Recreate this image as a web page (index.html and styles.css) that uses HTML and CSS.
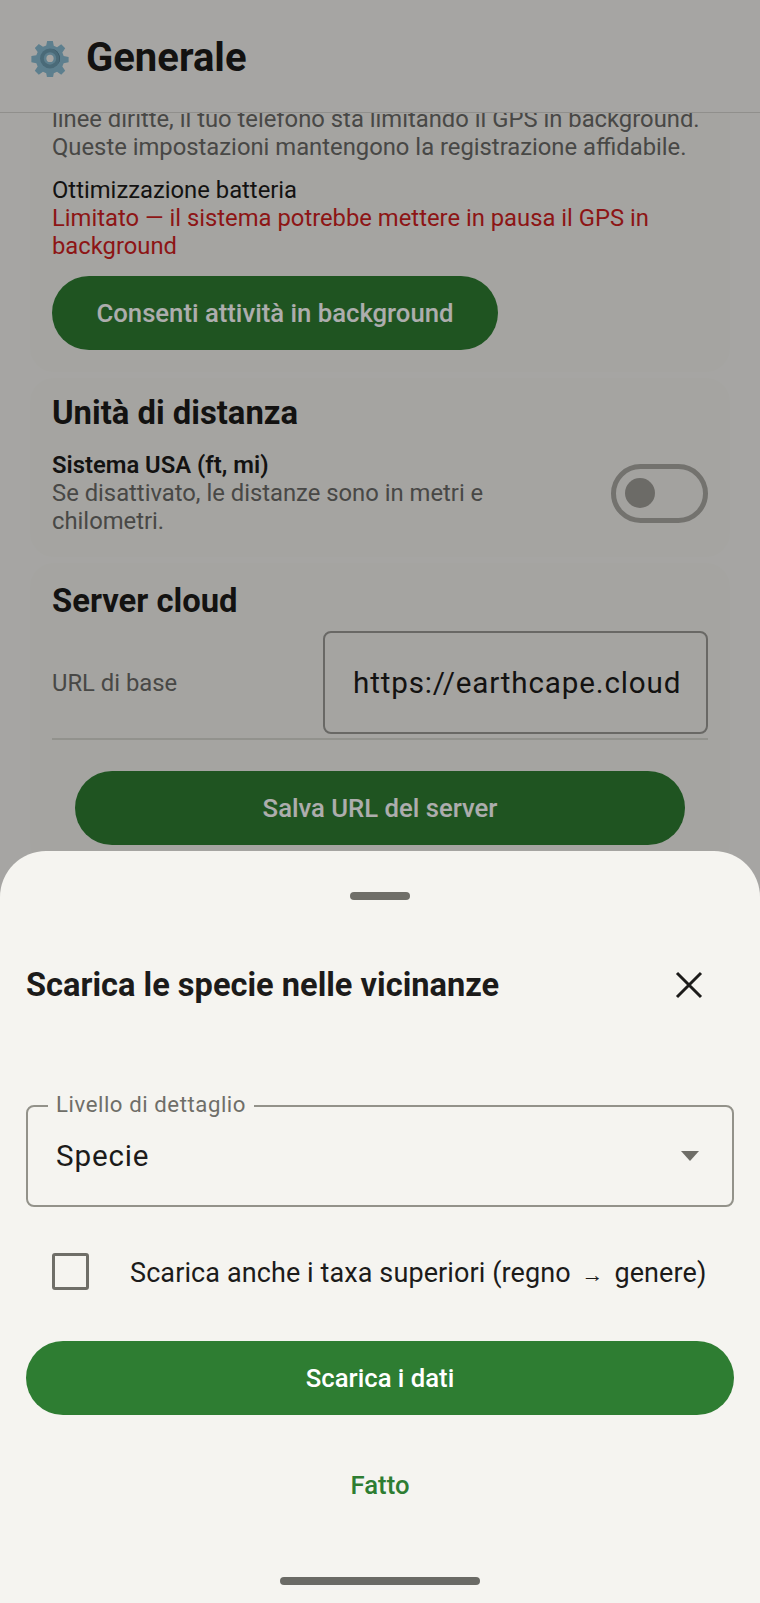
FILE: index.html
```html
<!DOCTYPE html>
<html lang="it">
<head>
<meta charset="utf-8">
<title>Generale</title>
<link rel="stylesheet" href="styles.css">
</head>
<body>
<div class="screen">
  <header class="topbar">
    <svg class="gear" viewBox="0 0 40 40" width="38" height="38" aria-hidden="true">
      <path fill="#8abcd2" d="M17 2h6l1 5.200 3.400 1.400 4.400-3 4.200 4.200-3 4.400 1.400 3.800 5.200 1v5.600l-5.200 1-1.400 3.400 3 4.400-4.200 4.200-4.400-3-3.400 1.400-1 5.200h-6l-1-5.200-3.400-1.400-4.400 3-4.200-4.200 3-4.400-1.400-3.400-5.200-1V18l5.200-1L7 13.800l-3-4.400L8.200 5.200l4.400 3L16 6.800z"/>
      <circle cx="20" cy="20.500" r="10.500" fill="#6d9cb2"/>
      <path fill="#4f7688" d="M20 10a10.500 10.500 0 0 1 8 17.200 11 11 0 0 0-8-17.200z"/>
      <circle cx="20" cy="20.500" r="6.500" fill="#8abcd2"/>
      <circle cx="20" cy="20.500" r="3.800" fill="#f5f4f0"/>
    </svg>
    <h1 class="page-title">Generale</h1>
  </header>
  <main class="scroll">
    <section class="card card-first">
      <p class="body muted">linee diritte, il tuo telefono sta limitando il GPS in background. Queste impostazioni mantengono la registrazione affidabile.</p>
      <p class="body status-label">Ottimizzazione batteria</p>
      <p class="body danger">Limitato — il sistema potrebbe mettere in pausa il GPS in background</p>
      <button class="btn btn-inline" type="button">Consenti attività in background</button>
    </section>
    <section class="card card-units">
      <h2 class="card-title">Unità di distanza</h2>
      <div class="setting-row">
        <div class="setting-text">
          <p class="body strong">Sistema USA (ft, mi)</p>
          <p class="body muted">Se disattivato, le distanze sono in metri e chilometri.</p>
        </div>
        <span class="switch"><span class="thumb"></span></span>
      </div>
    </section>
    <section class="card card-server">
      <h2 class="card-title">Server cloud</h2>
      <div class="url-row">
        <label class="body muted">URL di base</label>
        <div class="url-input">https://earthcape.cloud</div>
      </div>
      <button class="btn btn-save" type="button">Salva URL del server</button>
    </section>
  </main>
  <div class="scrim"></div>
  <aside class="sheet">
    <div class="handle"></div>
    <div class="sheet-head">
      <h2 class="sheet-title">Scarica le specie nelle vicinanze</h2>
      <svg class="close" viewBox="0 0 28 28" width="28" height="28" aria-hidden="true"><path d="M2 2l24 24M26 2L2 26" stroke="#1c1b1a" stroke-width="3" fill="none"/></svg>
    </div>
    <div class="select">
      <span class="select-label">Livello di dettaglio</span>
      <span class="select-value">Specie</span>
      <span class="caret"></span>
    </div>
    <div class="check-row">
      <span class="checkbox"></span>
      <span class="check-label">Scarica anche i taxa superiori (regno <span class="arrow">→</span> genere)</span>
    </div>
    <button class="btn btn-full" type="button">Scarica i dati</button>
    <div class="done">Fatto</div>
    <div class="home-bar"></div>
  </aside>
</div>
</body>
</html>
```
FILE: styles.css
```css
* { box-sizing: border-box; }
html, body { margin: 0; padding: 0; }
body {
  font-family: Roboto, "Noto Sans", sans-serif;
  color: #1c1b1a;
  background: #f5f4f0;
}
.screen {
  position: relative;
  width: 760px;
  height: 1603px;
  overflow: hidden;
  display: flex;
  flex-direction: column;
}
.topbar {
  flex: none;
  height: 113px;
  padding: 3px 0 0 31px;
  display: flex;
  align-items: center;
  gap: 17px;
  border-bottom: 1.5px solid #d4d3cf;
  background: #f5f4f0;
  position: relative;
  z-index: 1;
}
.gear { flex: none; }
.page-title {
  margin: 0;
  font-size: 40px;
  line-height: 48px;
  font-weight: 700;
}
.scroll {
  flex: 1;
  overflow: hidden;
  display: flex;
  flex-direction: column;
  gap: 6px;
  padding: 0 30px;
  min-height: 0;
}
.card {
  flex: none;
  background: #f3f2ee;
  border-radius: 24px;
  padding: 0 22px 22px;
}
.card-first { margin-top: -8px; border-radius: 0 0 24px 24px; }
.card-units { padding-top: 15px; }
.card-server { padding-top: 18px; }
.body {
  margin: 0;
  font-size: 23.8px;
  line-height: 28px;
}
.muted { color: #6b6a67; }
.status-label { margin-top: 15px; }
.danger { color: #d01f1f; }
.strong { font-weight: 600; }
.btn {
  display: block;
  border: 0;
  height: 74px;
  border-radius: 37px;
  background: #2e7d32;
  color: #fff;
  font-family: inherit;
  font-size: 25.700px;
  font-weight: 500;
  padding: 0;
  text-align: center;
}
.btn-inline { width: 446px; margin-top: 16px; }
.btn-save { width: 610px; margin: 31px auto 0; }
.btn-full { width: 708px; margin-top: 40px; }
.card-title {
  margin: 0;
  font-size: 32.800px;
  line-height: 40px;
  font-weight: 700;
}
.setting-row {
  display: flex;
  align-items: center;
  gap: 60px;
  margin-top: 18px;
}
.setting-text { flex: 1; min-width: 0; }
.switch {
  flex: none;
  width: 97px;
  height: 59px;
  border: 5px solid #aaa8a3;
  border-radius: 30px;
  background: #f0efeb;
  display: flex;
  align-items: center;
  padding-left: 9px;
}
.thumb {
  width: 30px;
  height: 30px;
  border-radius: 50%;
  background: #a09e98;
}
.url-row {
  display: flex;
  align-items: center;
  justify-content: space-between;
  margin-top: 10px;
  padding-bottom: 4px;
  border-bottom: 2px solid #d8d7d0;
}
.url-input {
  width: 385px;
  height: 103px;
  border: 2px solid #9b9a95;
  border-radius: 8px;
  padding: 0 0 0 28px;
  display: flex;
  align-items: center;
  font-size: 29.600px;
  letter-spacing: 0.85px;
  white-space: nowrap;
}
.scrim {
  position: absolute;
  inset: 0;
  background: rgba(0, 0, 0, 0.32);
  z-index: 2;
}
.sheet {
  position: absolute;
  left: 0;
  right: 0;
  bottom: 0;
  height: 752px;
  z-index: 3;
  background: #f5f4f0;
  border-radius: 46px 46px 0 0;
  padding: 41px 26px 0;
  display: flex;
  flex-direction: column;
}
.handle {
  flex: none;
  align-self: center;
  width: 60px;
  height: 8px;
  border-radius: 4px;
  background: #6f6e68;
}
.sheet-head {
  flex: none;
  height: 60px;
  margin-top: 55px;
  display: flex;
  align-items: center;
  justify-content: space-between;
  padding-right: 31px;
}
.sheet-title {
  margin: 0;
  font-size: 32.600px;
  line-height: 40px;
  font-weight: 700;
}
.close { flex: none; }
.select {
  flex: none;
  position: relative;
  margin-top: 90px;
  width: 708px;
  height: 102px;
  border: 2px solid #93928a;
  border-radius: 8px;
  display: flex;
  align-items: center;
  justify-content: space-between;
  padding: 0 33px 0 28px;
}
.select-label {
  position: absolute;
  left: 20px;
  top: -16px;
  padding: 0 8px;
  background: #f5f4f0;
  font-size: 22.200px;
  line-height: 26px;
  letter-spacing: 0.56px;
  color: #6f6e68;
}
.select-value {
  font-size: 29.600px;
  letter-spacing: 0.85px;
}
.caret {
  width: 0;
  height: 0;
  border-left: 9px solid transparent;
  border-right: 9px solid transparent;
  border-top: 10px solid #6f6e68;
}
.check-row {
  flex: none;
  height: 60px;
  margin-top: 34px;
  display: flex;
  align-items: center;
  padding-left: 26px;
  gap: 41px;
}
.checkbox {
  flex: none;
  width: 37px;
  height: 37px;
  border: 3.500px solid #6f6e68;
  border-radius: 3px;
}
.check-label {
  font-size: 27px;
  letter-spacing: 0.1px;
  padding-top: 3px;
  white-space: nowrap;
}
.arrow { font-size: 22px; margin: 0 4px; }
.done {
  flex: none;
  height: 74px;
  margin-top: 33px;
  display: flex;
  align-items: center;
  justify-content: center;
  font-size: 25.700px;
  font-weight: 500;
  color: #2e7d32;
}
.home-bar {
  flex: none;
  align-self: center;
  width: 200px;
  height: 8px;
  margin-top: 55px;
  border-radius: 4px;
  background: #6a6a65;
}
```
